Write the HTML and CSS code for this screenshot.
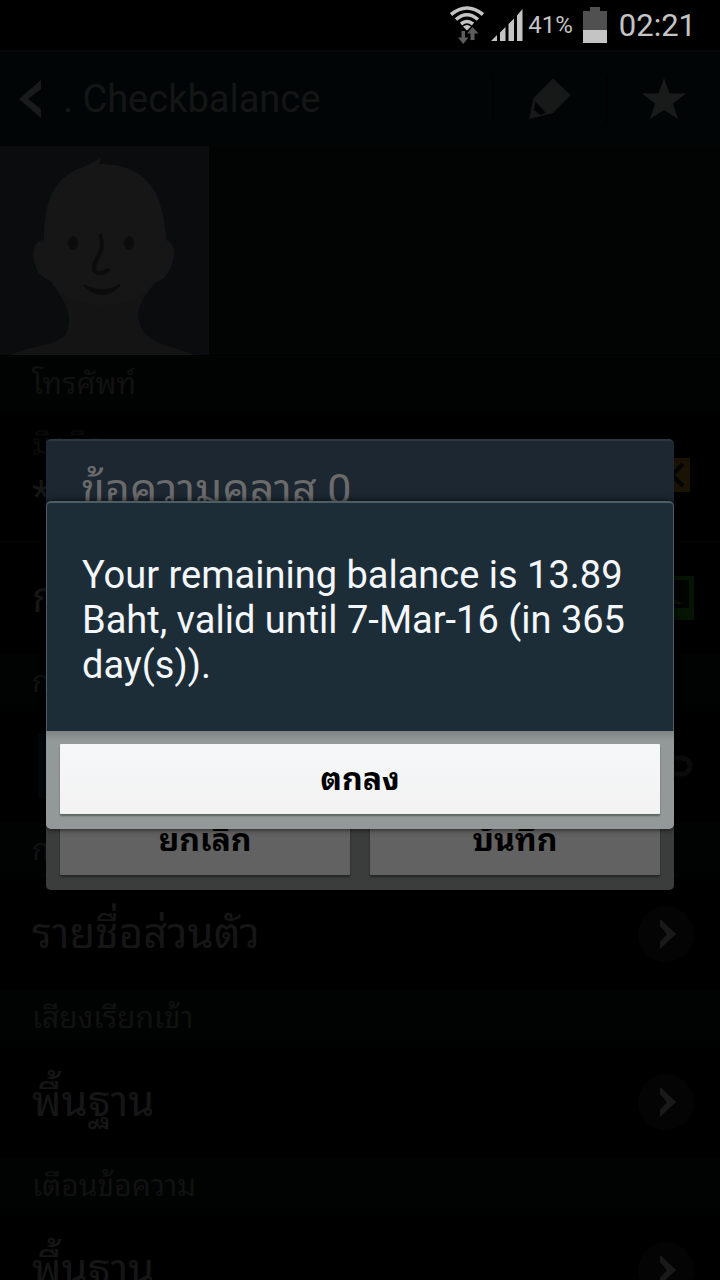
FILE: index.html
```html
<!DOCTYPE html>
<html lang="th">
<head>
<meta charset="utf-8">
<meta name="viewport" content="width=device-width, initial-scale=1">
<title>Checkbalance</title>
<link rel="stylesheet" href="styles.css">
</head>
<body>
<div class="screen">
  <header class="status">
    <svg class="status-wifi" width="36" height="38" viewBox="0 0 36 38" aria-label="Wi-Fi">
      <g fill="none" stroke="#c4c4c4" stroke-width="3.600">
        <path d="M2 8.500Q18-4.500 34 8.500"/>
        <path d="M7 13.500Q18 4 29 13.500"/>
        <path d="M12 18Q18 13 24 18"/>
      </g>
      <path d="M14 20.500Q18 17.500 22 20.500L18 24.500Z" fill="#c4c4c4"/>
      <path d="M12.500 25h3.500v6.500h3.500l-5.250 6.500-5.250-6.500h3.500zM21.500 34h4v-6.500h4l-6-6.500-5.500 6.500h3.500z" fill="#5c5c5c"/>
    </svg>
    <svg class="status-signal" width="34" height="34" viewBox="0 0 34 34" aria-label="Signal">
      <path d="M1 33L7 27V33ZM10 24.500L15.500 19V33H10ZM18.500 16L24 10.500V33H18.500ZM27 7.500L32.500 1V33H27Z" fill="#c4c4c4"/>
    </svg>
    <span class="status-percent">41%</span>
    <svg class="status-battery" width="24" height="36" viewBox="0 0 24 36" aria-label="Battery">
      <path d="M7 0h10v4h7v19H0V4h7z" fill="#505050"/>
      <path d="M0 23h24v13H0z" fill="#c4c4c4"/>
    </svg>
    <time class="status-time">02:21</time>
  </header>

  <div class="app">
    <div class="titlebar">
      <button class="icon-button back" aria-label="Back">
        <svg width="22" height="40" viewBox="0 0 22 40"><path d="M22 1V10L9 20 22 30V39L0 20Z" fill="#191b1b"/></svg>
      </button>
      <h1 class="title">. Checkbalance</h1>
      <button class="icon-button action" aria-label="Edit">
        <svg width="44" height="44" viewBox="0 0 44 44">
          <path d="M25 1.500L42.500 18 25 36 1 42 5.500 21ZM7.500 24.500L6 33 12 38 18 36Z" fill="#171919" fill-rule="evenodd"/>
        </svg>
      </button>
      <button class="icon-button action star" aria-label="Favourite">
        <svg width="44" height="44" viewBox="0 0 44 44">
          <path d="M22 1L27.500 16.500H44L31 26.500 36 42 22 33 8 42 13 26.500 0 16.500H16.500Z" fill="#191b1b"/>
        </svg>
      </button>
    </div>

    <div class="photo">
      <svg class="avatar" width="209" height="209" viewBox="0 0 209 209" aria-label="Contact photo">
        <path d="M0 0H209V209H0Z" fill="#0a0c0e"/>
        <path d="M12 209C32 198 64 201 68 183C72 168 66 157 51 136C49 134 43 132 38 126C31 114 31 94 44 94C44 64 50 40 69 28C80 20 91 20 101 11L99 18C126 18 144 26 156 48C164 66 165 79 166 94C178 97 176 118 164 132L155 137C138 157 136 166 140 179C147 199 173 200 194 209Z" fill="#161616"/>
        <path d="M51 136C74 168 136 165 155 137C138 157 136 166 140 179C147 199 173 200 194 209H12C32 198 64 201 68 183C72 168 66 157 51 136Z" fill="#131413"/>
        <g fill="#0c0c0c"><ellipse cx="73" cy="97" rx="5" ry="7"/><ellipse cx="129" cy="97" rx="5" ry="7"/></g>
        <path d="M100 88C107 109 93 110 94 124C97 129 104 128 109 123" fill="none" stroke="#0c0c0c" stroke-width="4"/>
        <path d="M84 139Q102 157 120 139Q102 149 84 139Z" fill="#0b0c0b" stroke="#0b0c0b" stroke-width="2"/>
      </svg>
    </div>

    <h2 class="section section-first">โทรศัพท์</h2>
    <div class="row row-phone">
      <div class="entry"><span class="label">มือถือ</span><span class="value">*</span></div>
      <svg class="row-icon" width="38" height="34" viewBox="0 0 38 34" aria-label="Call">
        <path d="M0 0h34v34H0z" fill="#1a1202"/><path d="M27 6L16 17 27 28" fill="none" stroke="#040404" stroke-width="4"/>
      </svg>
    </div>
    <div class="row row-message">
      <span class="value">ก</span>
      <svg class="row-icon" width="38" height="44" viewBox="0 0 38 44" aria-label="Message">
        <path d="M0 0h38v44H0z" fill="#061403"/><path d="M4 4h29v28H4z" fill="#020402"/><path d="M13 22l7 2 7 4H13z" fill="#071503"/>
      </svg>
    </div>

    <h2 class="section">ก</h2>
    <div class="row row-link">
      <svg width="40" height="64" viewBox="0 0 40 64" aria-label="Account"><path d="M0 0h40v64H0z" fill="#02070a"/></svg>
      <svg class="row-icon" width="38" height="24" viewBox="0 0 38 24" aria-label="Link">
        <path d="M4 4h22a8 8 0 0 1 0 16H4" fill="none" stroke="#0b0b0b" stroke-width="5"/>
      </svg>
    </div>

    <h2 class="section">ก</h2>
    <div class="row">
      <span class="value">รายชื่อส่วนตัว</span>
      <button class="icon-button more" aria-label="รายชื่อส่วนตัว"><svg width="22" height="32" viewBox="0 0 18 32"><path d="M3 1L19 16 3 31V24L10 16 3 8Z" fill="#191919"/></svg></button>
    </div>
    <h2 class="section">เสียงเรียกเข้า</h2>
    <div class="row">
      <span class="value">พื้นฐาน</span>
      <button class="icon-button more" aria-label="เสียงเรียกเข้า"><svg width="22" height="32" viewBox="0 0 18 32"><path d="M3 1L19 16 3 31V24L10 16 3 8Z" fill="#191919"/></svg></button>
    </div>
    <h2 class="section">เตือนข้อความ</h2>
    <div class="row">
      <span class="value">พื้นฐาน</span>
      <button class="icon-button more" aria-label="เตือนข้อความ"><svg width="22" height="32" viewBox="0 0 18 32"><path d="M3 1L19 16 3 31V24L10 16 3 8Z" fill="#191919"/></svg></button>
    </div>

    <div class="overlay overlay-behind">
      <section class="dialog dialog-behind" aria-labelledby="class-title">
        <h2 class="dialog-title" id="class-title">ข้อความคลาส 0</h2>
        <div class="dialog-buttons">
          <button class="dialog-button">ยกเลิก</button>
          <button class="dialog-button">บันทึก</button>
        </div>
      </section>
    </div>
    <div class="overlay">
      <section class="dialog dialog-front" role="dialog" aria-modal="true" aria-labelledby="message">
        <p class="dialog-message" id="message">Your remaining balance is 13.89 Baht, valid until 7-Mar-16 (in 365 day(s)).</p>
        <div class="dialog-buttons">
          <button class="dialog-button">ตกลง</button>
        </div>
      </section>
    </div>
  </div>
</div>
</body>
</html>
```

FILE: styles.css
```css
* {
  box-sizing: border-box;
}

body {
  margin: 0;
  background: #000;
  font-family: Roboto, "Noto Sans Thai Looped", "Droid Sans Thai", Loma, "Noto Sans Thai", "Noto Sans", sans-serif;
}

h1, h2, p {
  margin: 0;
  font-weight: 400;
}

svg {
  display: block;
  flex: none;
}

.screen {
  display: flex;
  flex-direction: column;
  height: 100vh;
  overflow: hidden;
  background: #000;
}

.status {
  display: flex;
  flex: none;
  align-items: center;
  justify-content: flex-end;
  height: 50px;
  padding-right: 24px;
  color: #c4c4c4;
}

.status-signal {
  margin-left: 5px;
}

.status-percent {
  margin-left: 4px;
  font-size: 24px;
}

.status-battery {
  margin-left: 10px;
}

.status-time {
  margin-left: 12px;
  font-size: 31px;
}

.app {
  position: relative;
  flex: 1;
  overflow: hidden;
}

.icon-button {
  display: flex;
  flex: none;
  align-items: center;
  justify-content: center;
  padding: 0;
  border: 0;
  background: none;
}

.titlebar {
  display: flex;
  align-items: center;
  height: 96px;
  padding-left: 19px;
  border-top: 2px solid #050708;
  background: #020506;
}

.title {
  flex: 1;
  padding-left: 22px;
  color: #141616;
  font-size: 38px;
  line-height: 48px;
}

.action {
  width: 114px;
  height: 48px;
  border-left: 2px solid #010303;
}

.photo {
  border-bottom: 1px solid #000;
  background: #020403;
}

.section {
  height: 56px;
  padding: 0 32px;
  border-top: 1px solid #030505;
  background: #010302;
  color: #111;
  font-size: 30px;
  line-height: 54px;
}

.section-first {
  height: 57px;
}

.row {
  display: flex;
  align-items: center;
  justify-content: space-between;
  height: 112px;
  padding: 0 26px 0 32px;
}

.row-phone {
  height: 129px;
  padding-bottom: 4px;
  border-bottom: 1px solid #040404;
}

.entry {
  display: flex;
  flex-direction: column;
  gap: 4px;
}

.label {
  color: #0b0b0b;
  font-size: 30px;
  line-height: 38px;
}

.value {
  color: #161616;
  font-size: 42px;
  line-height: 56px;
}

.row-link {
  padding-left: 38px;
}

.more {
  width: 56px;
  height: 56px;
  border-radius: 50%;
  background: #040404;
}

.overlay {
  position: absolute;
  inset: 0;
  display: flex;
  flex-direction: column;
  justify-content: center;
  padding: 0 46px;
}

.overlay-behind {
  padding-bottom: 2px;
}

.dialog {
  display: flex;
  flex-direction: column;
  overflow: hidden;
  border-radius: 5px;
}

.dialog-behind {
  min-height: 451px;
  justify-content: space-between;
  border-top: 2px solid #2c383d;
  background: #1c2731;
}

.dialog-title {
  padding: 12px 35px;
  color: #6b6b6b;
  font-size: 43px;
  line-height: 72px;
}

.dialog-front {
  box-shadow: 0 0 6px rgba(0, 0, 0, 0.8);
}

.dialog-message {
  padding: 50px 35px 43px;
  border: 1px solid #4e5d64;
  border-top-width: 2px;
  border-bottom: 0;
  border-radius: 5px 5px 0 0;
  background: #1d2d38;
  color: #f3f7fb;
  font-size: 38px;
  line-height: 45px;
}

.dialog-buttons {
  display: flex;
  gap: 20px;
  padding: 13px 14px 15px;
  background: linear-gradient(#7e8484, #939999 10px, #939999);
}

.dialog-button {
  flex: 1;
  height: 70px;
  padding: 0;
  border: 0;
  border-radius: 1px;
  background: linear-gradient(#f6f7f9, #f2f2f2);
  box-shadow: 0 2px 2px #5c6262;
  color: #000;
  font-family: inherit;
  font-size: 32px;
  font-weight: 700;
  line-height: 70px;
}

.dialog-behind .dialog-buttons {
  background: #3b3d3c;
}

.dialog-behind .dialog-button {
  background: #626262;
  box-shadow: 0 2px 2px #232524;
}
```
